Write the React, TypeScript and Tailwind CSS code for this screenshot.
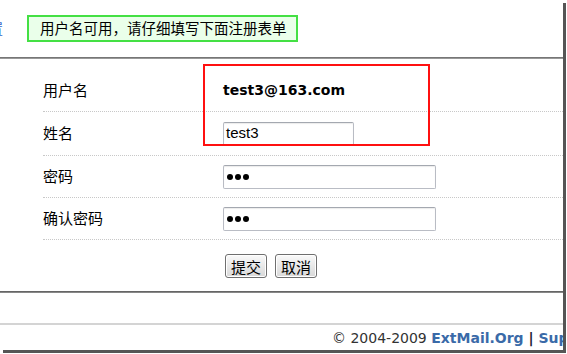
import React from 'react';

const cjk = "font-['Noto_Sans_CJK_SC','Noto_Sans',sans-serif]";

const Dots = () => (
  <div className="flex items-center gap-[2px] pl-[3px]">
    <span className="w-[6px] h-[6px] rounded-full bg-black" />
    <span className="w-[6px] h-[6px] rounded-full bg-black" />
    <span className="w-[6px] h-[6px] rounded-full bg-black" />
  </div>
);

const Field = ({ width, children }: { width: string; children?: React.ReactNode }) => (
  <div
    className={`${width} h-[24px] flex items-center border border-[#b9bcc4] border-t-[#a4a8b0] rounded-[2px] bg-white shadow-[inset_0_1px_1px_rgba(0,0,0,0.08)]`}
  >
    {children}
  </div>
);

const Btn = ({ label }: { label: string }) => (
  <button
    type="button"
    className={`${cjk} h-[24px] px-[5px] text-[15px] leading-none text-black border border-[#6f6f6f] rounded-[3px] bg-gradient-to-b from-[#fafafa] to-[#d8d8d8] shadow-[inset_0_0_0_1px_#fff]`}
  >
    {label}
  </button>
);

export default function App() {
  return (
    <div className="w-[567px] h-[354px] bg-white">
      <div className="relative w-[563px] h-[350px] overflow-hidden bg-white shadow-[3px_3px_0_#555]">
        {/* notice */}
        <div className="flex items-center h-[57px] pt-[1px] pb-[2px]">
          <span className={`${cjk} -ml-[11px] w-[14px] text-[14px] text-[#3366cc]`}>置</span>
          <div
            className={`${cjk} ml-[24px] h-[27px] w-[271px] flex items-center pl-[11px] border-2 border-[#44e044] bg-[#eaffea] text-[14.5px] text-black whitespace-nowrap`}
          >
            用户名可用，请仔细填写下面注册表单
          </div>
        </div>
        <div className="h-[2px] bg-gradient-to-b from-[#666] to-[#aaa]" />

        {/* form */}
        <div className="ml-[43px] mt-[10px]">
          <div className="h-[43px] flex items-center border-b border-dotted border-[#c8c8c8]">
            <div className={`${cjk} w-[180px] text-[15px] text-black`}>用户名</div>
            <div className="font-['DejaVu_Sans',sans-serif] font-bold text-[14px] text-black">
              test3@163.com
            </div>
          </div>
          <div className="h-[44px] flex items-center border-b border-dotted border-[#c8c8c8]">
            <div className={`${cjk} w-[180px] text-[15px] text-black`}>姓名</div>
            <Field width="w-[131px]">
              <span className="pl-[2px] font-['Liberation_Sans',sans-serif] text-[15px] text-black">test3</span>
            </Field>
          </div>
          <div className="h-[42px] flex items-center border-b border-dotted border-[#c8c8c8]">
            <div className={`${cjk} w-[180px] text-[15px] text-black`}>密码</div>
            <Field width="w-[213px]">
              <Dots />
            </Field>
          </div>
          <div className="h-[42px] flex items-center border-b border-dotted border-[#c8c8c8]">
            <div className={`${cjk} w-[180px] text-[15px] text-black`}>确认密码</div>
            <Field width="w-[213px]">
              <Dots />
            </Field>
          </div>
          <div className="flex gap-[8px] pl-[182px] pt-[14px] pb-[13px]">
            <Btn label="提交" />
            <Btn label="取消" />
          </div>
        </div>

        <div className="h-[2px] bg-gradient-to-b from-[#555] to-[#999]" />
        <div className="h-[30px]" />
        <div className="h-[2px] bg-[#d4d4d4]" />

        {/* footer */}
        <div className="h-[26px] flex items-center pl-[332px] whitespace-nowrap font-['DejaVu_Sans',sans-serif] text-[14px] text-[#333]">
          <span>© 2004-2009&nbsp;</span>
          <span className="font-bold text-[#3a6aa8]">ExtMail.Org</span>
          <span className="font-bold text-[#223]">&nbsp;|&nbsp;</span>
          <span className="font-bold text-[#3a6aa8]">Support</span>
        </div>

        {/* red annotation */}
        <div className="absolute left-[203px] top-[64px] w-[227px] h-[82px] border-2 border-[#ff1010]" />
      </div>
    </div>
  );
}
